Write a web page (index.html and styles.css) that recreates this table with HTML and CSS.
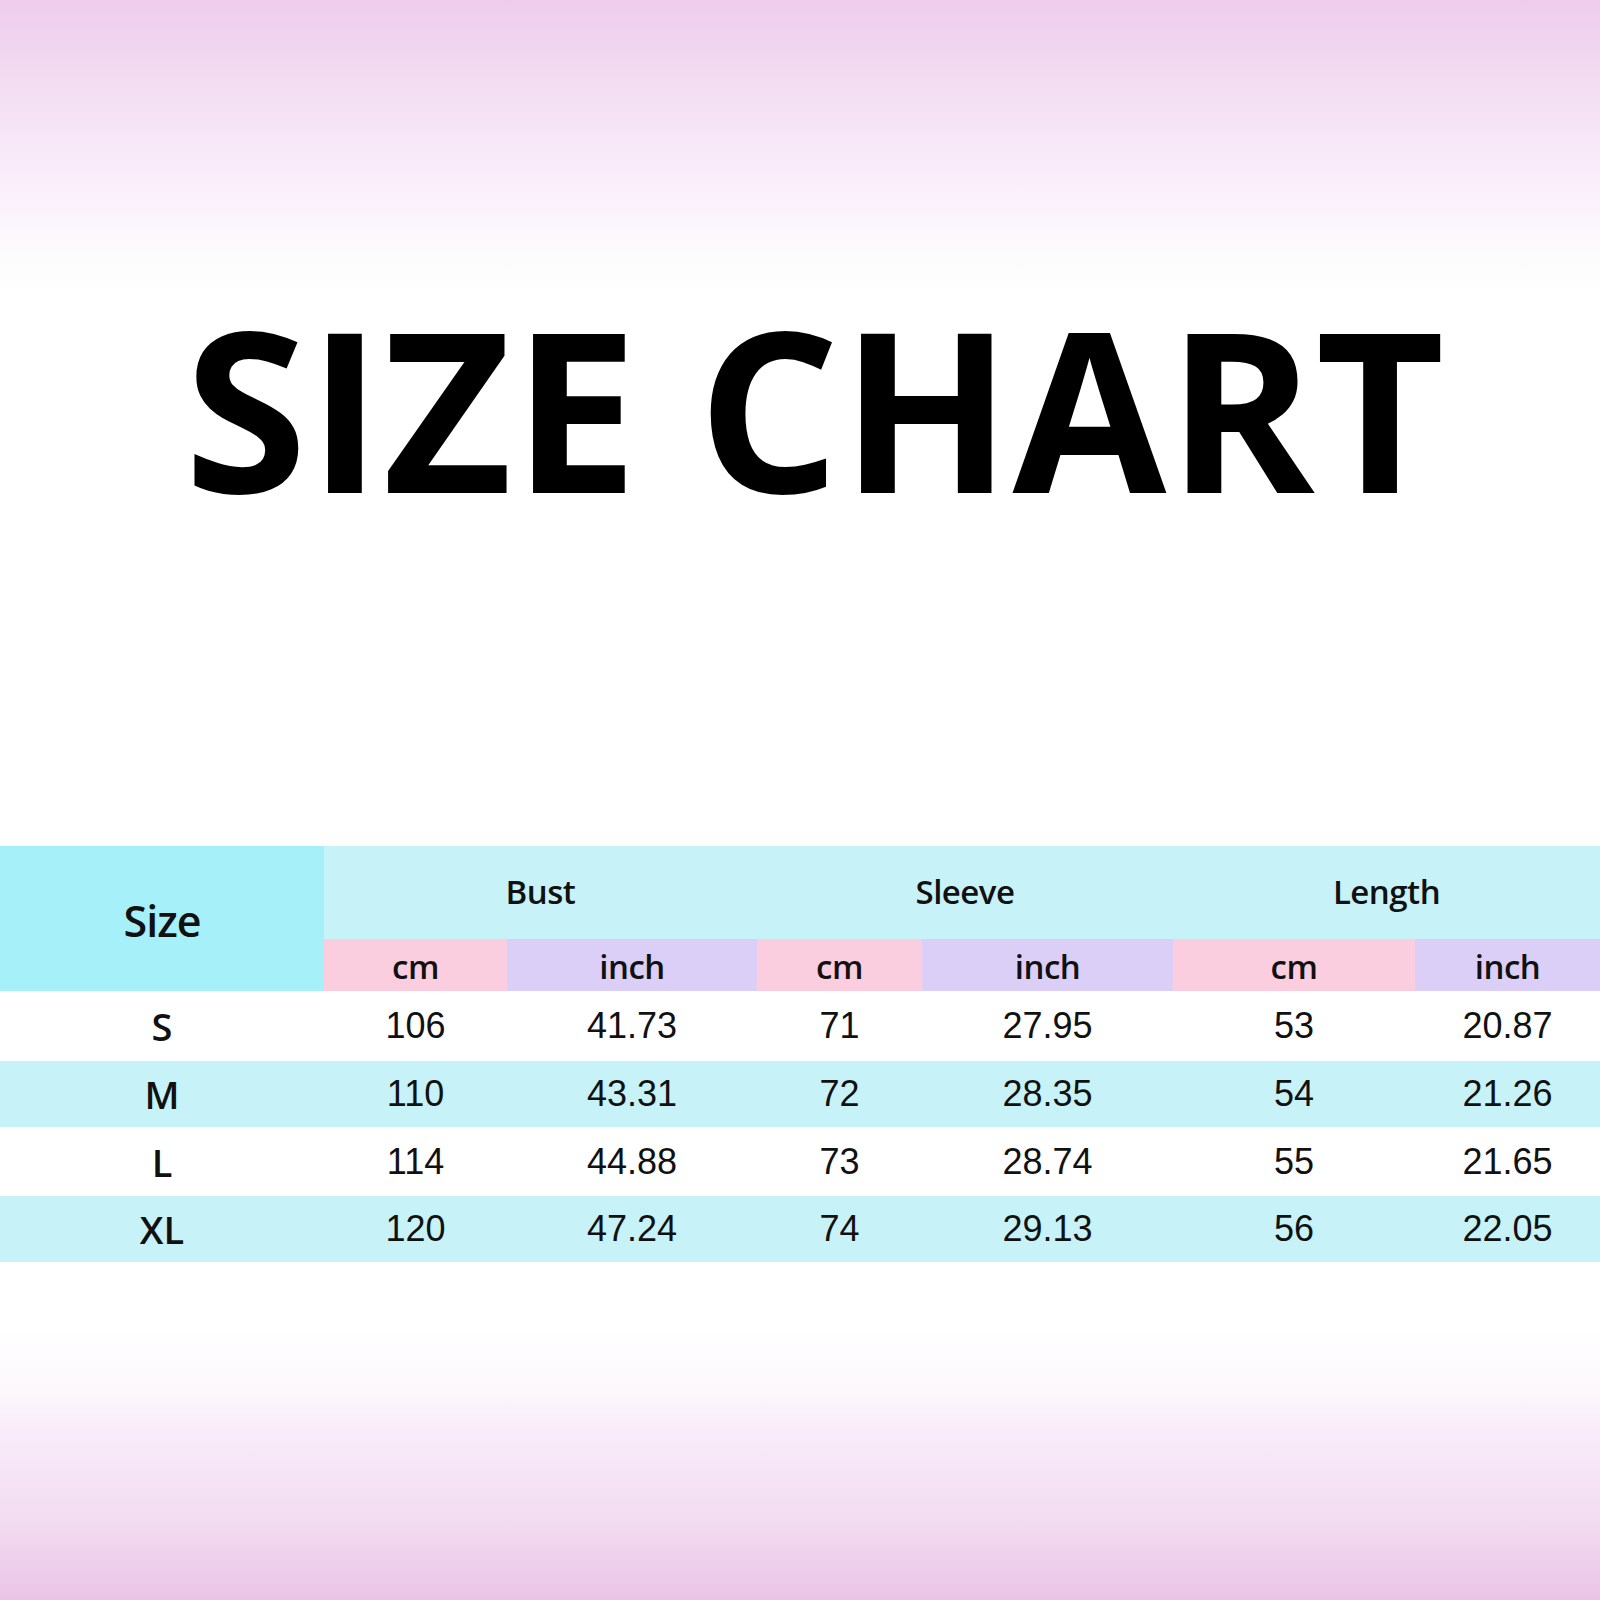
FILE: index.html
```html
<!DOCTYPE html>
<html lang="en">
<head>
<meta charset="utf-8">
<title>Size Chart</title>
<link rel="stylesheet" href="styles.css">
</head>
<body>
<main class="page">
  <h1 class="title">SIZE CHART</h1>
  <div class="chart">
    <div class="cell size-head">Size</div>
    <div class="cell group g-bust">Bust</div>
    <div class="cell group g-sleeve">Sleeve</div>
    <div class="cell group g-length">Length</div>
    <div class="cell unit cm">cm</div>
    <div class="cell unit inch">inch</div>
    <div class="cell unit cm">cm</div>
    <div class="cell unit inch">inch</div>
    <div class="cell unit cm">cm</div>
    <div class="cell unit inch">inch</div>

    <div class="row r-white">
      <div class="cell label">S</div>
      <div class="cell num">106</div><div class="cell num">41.73</div>
      <div class="cell num">71</div><div class="cell num">27.95</div>
      <div class="cell num">53</div><div class="cell num">20.87</div>
    </div>
    <div class="row r-cyan">
      <div class="cell label">M</div>
      <div class="cell num">110</div><div class="cell num">43.31</div>
      <div class="cell num">72</div><div class="cell num">28.35</div>
      <div class="cell num">54</div><div class="cell num">21.26</div>
    </div>
    <div class="row r-white">
      <div class="cell label">L</div>
      <div class="cell num">114</div><div class="cell num">44.88</div>
      <div class="cell num">73</div><div class="cell num">28.74</div>
      <div class="cell num">55</div><div class="cell num">21.65</div>
    </div>
    <div class="row r-cyan">
      <div class="cell label">XL</div>
      <div class="cell num">120</div><div class="cell num">47.24</div>
      <div class="cell num">74</div><div class="cell num">29.13</div>
      <div class="cell num">56</div><div class="cell num">22.05</div>
    </div>
  </div>
</main>
</body>
</html>
```

FILE: styles.css
```css
html, body {
  margin: 0;
  padding: 0;
}

.page {
  width: 1600px;
  height: 1600px;
  display: flex;
  flex-direction: column;
  align-items: stretch;
  background: linear-gradient(to bottom,
    rgb(238, 204, 236) 0px,
    rgb(243, 222, 242) 90px,
    rgb(250, 238, 251) 180px,
    rgb(253, 252, 253) 260px,
    #ffffff 300px,
    #ffffff 1330px,
    rgb(252, 248, 252) 1390px,
    rgb(249, 236, 250) 1430px,
    rgb(242, 220, 241) 1520px,
    rgb(234, 196, 230) 1600px);
  overflow: hidden;
}

.title {
  margin: 294px 0 0 0;
  padding: 0 0 0 30px;
  height: 226px;
  font-family: "Open Sans", "Noto Sans", sans-serif;
  font-weight: 700;
  font-size: 223px;
  line-height: 226px;
  letter-spacing: 1px;
  text-align: center;
  color: #000;
}

.chart {
  margin-top: 326px;
  display: grid;
  grid-template-columns: 324px 183px 250px 165px 251px 242px 185px;
  grid-template-rows: 93px 52px 70px 66px 69px 66px;
}

.row {
  display: contents;
}

.cell {
  display: flex;
  align-items: center;
  justify-content: center;
  color: #111;
}

.size-head {
  grid-row: 1 / span 2;
  grid-column: 1;
  background: rgb(166, 240, 250);
  font-family: "Open Sans", "Noto Sans", sans-serif;
  font-weight: 600;
  font-size: 43px;
  letter-spacing: -1px;
  padding-top: 4px;
}

.group {
  background: rgb(199, 243, 248);
  font-family: "Open Sans", "Noto Sans", sans-serif;
  font-weight: 600;
  font-size: 33px;
  letter-spacing: -0.5px;
  padding-bottom: 2px;
}

.g-bust { grid-column: 2 / span 2; }
.g-sleeve { grid-column: 4 / span 2; }
.g-length { grid-column: 6 / span 2; }

.unit {
  font-family: "Open Sans", "Noto Sans", sans-serif;
  font-weight: 600;
  font-size: 33px;
  letter-spacing: -0.5px;
  padding-top: 2px;
}

.cm { background: rgb(250, 206, 223); }
.inch { background: rgb(219, 207, 248); }

.r-white .cell { background: #ffffff; }
.r-cyan .cell { background: rgb(199, 243, 248); }

.label {
  font-family: "Open Sans", "Noto Sans", sans-serif;
  font-weight: 600;
  font-size: 38px;
}

.num {
  font-family: "Liberation Sans", Arial, sans-serif;
  font-size: 36px;
}
```
